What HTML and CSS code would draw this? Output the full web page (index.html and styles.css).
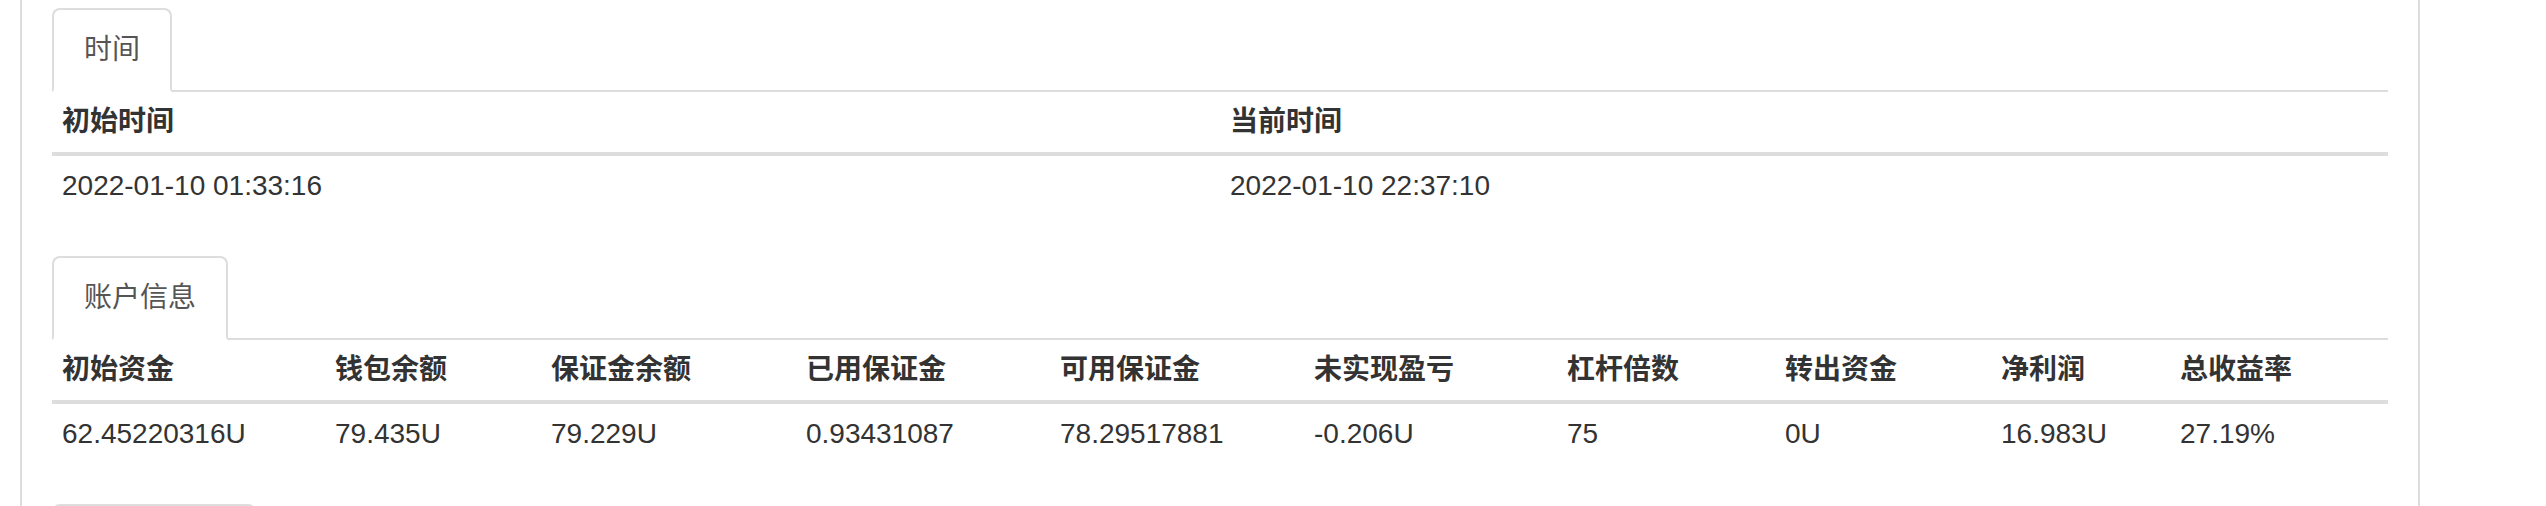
FILE: index.html
```html
<!DOCTYPE html>
<html lang="zh-CN">
<head>
<meta charset="utf-8">
<title>账户概览</title>
<link rel="stylesheet" href="styles.css">
</head>
<body>
<div class="panel">
  <section class="block">
    <ul class="tabs"><li class="tab">时间</li></ul>
    <table class="grid">
      <colgroup><col class="half"><col class="half"></colgroup>
      <thead><tr><th>初始时间</th><th>当前时间</th></tr></thead>
      <tbody><tr><td>2022-01-10 01:33:16</td><td>2022-01-10 22:37:10</td></tr></tbody>
    </table>
  </section>
  <section class="block">
    <ul class="tabs"><li class="tab">账户信息</li></ul>
    <table class="grid">
      <colgroup>
        <col class="c1"><col class="c2"><col class="c3"><col class="c4"><col class="c5">
        <col class="c6"><col class="c7"><col class="c8"><col class="c9"><col class="c10">
      </colgroup>
      <thead>
        <tr>
          <th>初始资金</th><th>钱包余额</th><th>保证金余额</th><th>已用保证金</th><th>可用保证金</th>
          <th>未实现盈亏</th><th>杠杆倍数</th><th>转出资金</th><th>净利润</th><th>总收益率</th>
        </tr>
      </thead>
      <tbody>
        <tr>
          <td>62.45220316U</td><td>79.435U</td><td>79.229U</td><td>0.93431087</td><td>78.29517881</td>
          <td>-0.206U</td><td>75</td><td>0U</td><td>16.983U</td><td>27.19%</td>
        </tr>
      </tbody>
    </table>
  </section>
  <section class="block">
    <ul class="tabs"><li class="tab">当前持仓单</li></ul>
  </section>
</div>
</body>
</html>
```

FILE: styles.css
```css
html, body {
  margin: 0;
  padding: 0;
  background: #fff;
}

body {
  font-family: "Liberation Sans", "Noto Sans CJK SC", sans-serif;
  font-size: 28px;
  line-height: 40px;
  color: #333;
}

.panel {
  margin-left: 20px;
  width: 2336px;
  padding: 8px 30px 0;
  border-left: 2px solid #ddd;
  border-right: 2px solid #ddd;
  min-height: 600px;
}

.tabs {
  display: flex;
  margin: 0;
  padding: 0;
  list-style: none;
  border-bottom: 2px solid #ddd;
}

.tab {
  margin-bottom: -2px;
  padding: 20px 30px;
  border: 2px solid #ddd;
  border-bottom-color: transparent;
  border-radius: 8px 8px 0 0;
  background: #fff;
  color: #555;
  line-height: 40px;
}

.grid {
  width: 100%;
  table-layout: fixed;
  border-collapse: separate;
  border-spacing: 0;
  margin-bottom: 40px;
}

.grid th,
.grid td {
  padding: 10px;
  line-height: 40px;
  text-align: left;
  white-space: nowrap;
}

.grid th {
  font-weight: bold;
  vertical-align: bottom;
  border-bottom: 4px solid #ddd;
}

.grid td {
  vertical-align: top;
}

.half { width: 50%; }
.c1 { width: 273px; }
.c2 { width: 216px; }
.c3 { width: 255px; }
.c4 { width: 254px; }
.c5 { width: 254px; }
.c6 { width: 253px; }
.c7 { width: 218px; }
.c8 { width: 216px; }
.c9 { width: 179px; }
.c10 { width: 218px; }
```
